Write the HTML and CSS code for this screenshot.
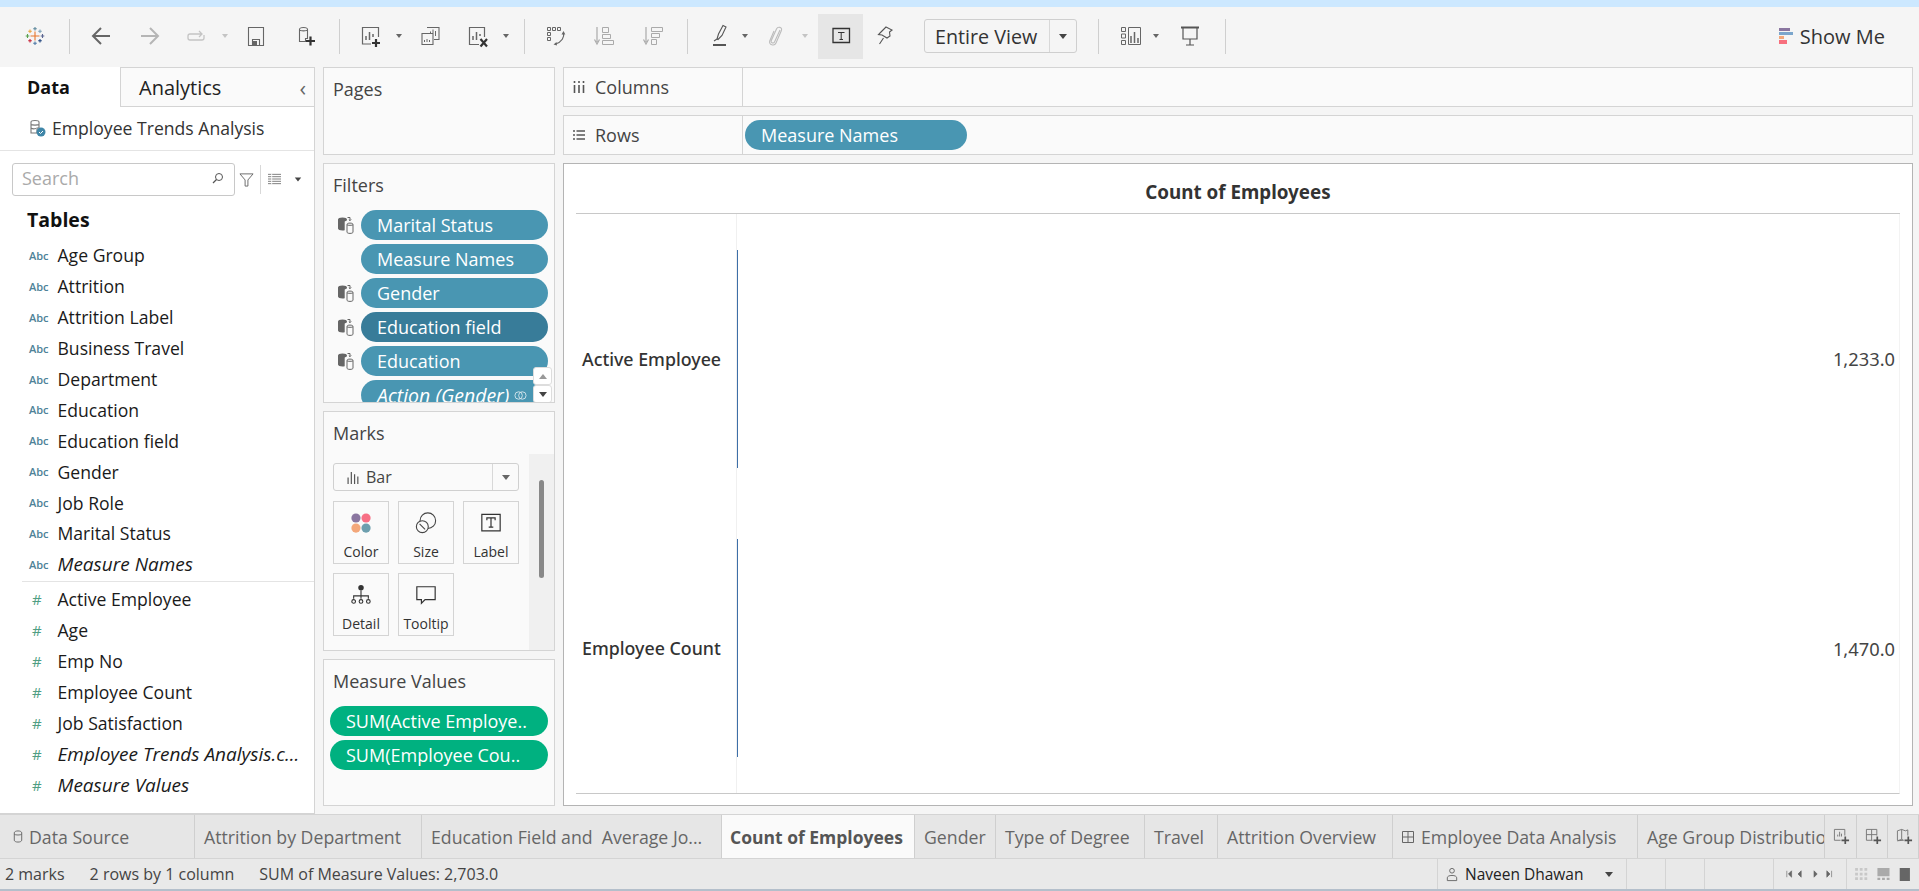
FILE: index.html
```html
<!DOCTYPE html>
<html lang="en">
<head>
<meta charset="utf-8">
<title>Tableau - Count of Employees</title>
<link rel="stylesheet" href="styles.css">
</head>
<body>
<svg class="defs" width="0" height="0" aria-hidden="true">
  <defs>
    <symbol id="dbl" viewBox="0 0 18 18">
      <ellipse cx="5.5" cy="3.5" rx="4.5" ry="2" fill="#666"/>
      <path d="M1 3.5v9c0 1.2 2 2 4.5 2 .8 0 1.5-.1 2.2-.2V3.5z" fill="#666"/>
      <path d="M10.500 1.500h2.500v3M11.800 3.500l1.200 1.200 1.200-1.200" fill="none" stroke="#666"/>
      <path d="M10 8.500c0-1 1.200-1.400 3-1.400s3 .4 3 1.400v7.500c0 1-1.200 1.400-3 1.400s-3-.4-3-1.400zM10 8.800c.6.7 5.400.7 6 0" fill="#fafafa" stroke="#666"/>
    </symbol>
  </defs>
</svg>
<div class="app">
  <div class="titlebar"></div>

  <header class="toolbar">
    <svg class="ic logo" viewBox="0 0 24 24">
      <g fill="none" stroke-width="1.100">
        <path d="M12 7.500v9M7.500 12h9" stroke="#e8762b"/>
        <path d="M12 3v3.500M10.200 4.700h3.600" stroke="#5b879b"/>
        <path d="M12 17.500v3.500M10.200 19.300h3.600" stroke="#4e79a7"/>
        <path d="M4.500 10v4M2.700 12h3.600" stroke="#59a14f"/>
        <path d="M19.500 10v4M17.700 12h3.600" stroke="#5b6591"/>
        <path d="M7 5.500v3.500M5.200 7.200h3.600" stroke="#e8a33d"/>
        <path d="M17 5.500v3.500M15.200 7.200h3.600" stroke="#7b9fb5"/>
        <path d="M7 15v3.500M5.200 16.800h3.600" stroke="#c72035"/>
        <path d="M17 15v3.500M15.200 16.800h3.600" stroke="#1f447e"/>
      </g>
    </svg>
    <span class="sep s1"></span>
    <svg class="ic i-back" viewBox="0 0 24 24"><path d="M21 12H5M12 4l-8 8 8 8" fill="none" stroke="#666" stroke-width="2"/></svg>
    <svg class="ic i-fwd" viewBox="0 0 24 24"><path d="M3 12h16M12 4l8 8-8 8" fill="none" stroke="#b5b5b5" stroke-width="2"/></svg>
    <svg class="ic i-redo" viewBox="0 0 24 24"><path d="M20 11v3c0 1-.6 2-2 2H6c-1.400 0-2-1-2-2v-2c0-1 .6-2 2-2h12M15 7l3 3-3 3" fill="none" stroke="#c4c4c4" stroke-width="1.300"/></svg>
    <span class="car off c-redo"></span>
    <svg class="ic i-save" viewBox="0 0 24 24"><path d="M4.500 3.500h15v18h-15zM8.500 21.500v-6h7v6" fill="none" stroke="#666" stroke-width="1.100"/><path d="M9 17h4v4H9z" fill="#666"/></svg>
    <svg class="ic i-ds" viewBox="0 0 24 24"><path d="M6.500 5.500c0-1.400 2-2 4-2s4 .6 4 2v9h-2v3h-6zM6.500 6c.8 1.200 7.200 1.200 8 0" fill="none" stroke="#666" stroke-width="1.100"/><path d="M17.500 12.500v9M13 17h9" stroke="#333" stroke-width="2.200"/></svg>
    <span class="sep s2"></span>
    <svg class="ic i-add" viewBox="0 0 24 24"><path d="M13 20H4.500V3.500h16V13" fill="none" stroke="#666" stroke-width="1.200"/><path d="M8 16v-4M11.500 16V8M15 13V10" stroke="#666" stroke-width="1.500"/><path d="M18 15v8M14 19h8" stroke="#333" stroke-width="2.200"/></svg>
    <span class="car c-add"></span>
    <svg class="ic i-dup" viewBox="0 0 24 24"><path d="M9 3.500h12v12h-5M4 9.500h11v11H4z" fill="#f5f5f5" stroke="#666" stroke-width="1.100"/><path d="M12.500 9V7.500M15 9V5.500M17.500 12V7" stroke="#666"/><path d="M6.500 18v-2M9 18v-3M11.500 18v-2" stroke="#666"/></svg>
    <svg class="ic i-clear" viewBox="0 0 24 24"><path d="M13 20.500H3.500V3.500h15V13" fill="none" stroke="#666" stroke-width="1.200"/><path d="M7 16v-4M10.500 16V8M14 12V10" stroke="#666" stroke-width="1.500"/><path d="M14.500 15l6.500 7.500M21 15l-6.500 7.500" stroke="#333" stroke-width="2.200"/></svg>
    <span class="car c-clear"></span>
    <span class="sep s3"></span>
    <svg class="ic i-swap" viewBox="0 0 24 24"><path d="M3.500 3.500h3v3h-3zM8.500 3.500h3v3h-3zM13.500 3.500h3v3h-3zM3.500 8.500h3v3h-3zM3.500 13.500h3v3h-3z" fill="none" stroke="#666"/><path d="M19.500 9c1 4-1.500 9-8 11" fill="none" stroke="#666" stroke-width="1.200"/><path d="M17.500 10.500L19.500 7l1.800 3.500zM12.500 18l-3 2.500 3.500 1z" fill="#666"/></svg>
    <svg class="ic i-sa" viewBox="0 0 24 24"><path d="M5 3v15M2.500 15.500L5 20l2.500-4.500" fill="none" stroke="#aaa" stroke-width="1.200"/><path d="M10.500 3.500h6v5h-6zM10.500 10.500h8v4h-8zM10.500 16.500h11v4h-11z" fill="none" stroke="#aaa"/></svg>
    <svg class="ic i-sd" viewBox="0 0 24 24"><path d="M5 3v15M2.500 15.500L5 20l2.500-4.500" fill="none" stroke="#aaa" stroke-width="1.200"/><path d="M10.500 3.500h11v4h-11zM10.500 9.500h8v4h-8zM10.500 15.500h5v5h-5z" fill="none" stroke="#aaa"/></svg>
    <span class="sep s4"></span>
    <svg class="ic i-hl" viewBox="0 0 24 24"><path d="M9 15l1.500-5L15 1.500l3 1.500-4 8.500-4 4zM6 17l3-2" fill="none" stroke="#555" stroke-width="1.100"/><path d="M5 21h13" stroke="#555" stroke-width="2"/></svg>
    <span class="car c-hl"></span>
    <svg class="ic i-clip" viewBox="0 0 24 24"><path d="M15 6l-5.500 12c-.8 1.800-4 1-3.300-1.200L11.500 5c1.200-2.800 6-2 5 1.200L11 19c-1.500 3.500-7.500 2-6.300-2L9 7" fill="none" stroke="#bcbcbc" stroke-width="1.100"/></svg>
    <span class="car off c-clip"></span>
    <div class="tool-active"><svg class="ic" viewBox="0 0 24 24"><path d="M4 4.500h16.500v14H4z" fill="none" stroke="#333" stroke-width="1.300"/><path d="M9 8.500h6.500M12.200 8.500v7M10.500 15.500h3.500" fill="none" stroke="#333"/></svg></div>
    <svg class="ic i-pin" viewBox="0 0 24 24"><path d="M13 3l6 3-2.500 2 .5 4-3 2-5-3-3.500-.5 2.500-2.500zM10.500 14l-4 6" fill="none" stroke="#555" stroke-width="1.100"/></svg>
    <div class="combo"><span class="combo-label">Entire View</span><span class="combo-btn"><span class="car dark"></span></span></div>
    <span class="sep s5"></span>
    <svg class="ic i-cards" viewBox="0 0 24 24"><path d="M2.500 3.500h4v4h-4zM2.500 10h4v4h-4zM2.500 16.500h4v4h-4zM9.500 3.500h12v17h-12z" fill="none" stroke="#666"/><path d="M12 19v-7M15.500 19V8M19 19v-5" stroke="#666" stroke-width="1.500"/></svg>
    <span class="car c-cards"></span>
    <svg class="ic i-present" viewBox="0 0 24 24"><path d="M3 3.500h18" stroke="#555" stroke-width="2"/><path d="M5 4v11h14V4M12 15v6M8 21h8" fill="none" stroke="#555" stroke-width="1.200"/></svg>
    <span class="sep s6"></span>
    <div class="showme">
      <svg class="showme-ic" viewBox="0 0 14 16"><path d="M0 0h11v3H0z" fill="#8a76a0"/><path d="M0 4h14v3H0z" fill="#7ba6cc"/><path d="M0 8h5v3H0z" fill="#f3a77a"/><path d="M0 12h8v4H0z" fill="#f76f7d"/></svg>
      <span>Show Me</span>
    </div>
  </header>

  <main class="workspace">
    <aside class="sidebar">
      <div class="side-tabs">
        <div class="side-tab active">Data</div>
        <div class="side-tab analytics">Analytics<span class="chev">‹</span></div>
      </div>
      <div class="source">
        <svg class="source-ic" viewBox="0 0 18 18"><path d="M3 3c0-1 1.800-1.500 4-1.500S11 2 11 3v6H9v5H3zM3 5.500c1 .8 7 .8 8 0M3 9c1 .8 4 .8 5 .5" fill="none" stroke="#777" stroke-width="1.100"/><circle cx="13" cy="13" r="4.500" fill="#3f86a8"/><path d="M11 13l1.500 1.500 2.500-2.500" fill="none" stroke="#fff"/></svg>
        <span>Employee Trends Analysis</span>
      </div>
      <div class="search-row">
        <div class="search"><span>Search</span>
          <svg class="search-ic" viewBox="0 0 12 12"><circle cx="7" cy="5" r="3.500" fill="none" stroke="#555"/><path d="M4.500 7.500L1 11" stroke="#555" stroke-width="1.200"/></svg>
        </div>
        <svg class="filter-ic" viewBox="0 0 16 16"><path d="M1 2h14L9.500 8.500V15h-3V8.500z" fill="none" stroke="#666"/></svg>
        <span class="search-div"></span>
        <svg class="list-ic" viewBox="0 0 14 12"><path d="M0 1h14M0 3.500h14M0 6h14M0 8.500h14M0 11h14" stroke="#777"/><path d="M4 0v12" stroke="#fff"/></svg>
        <span class="car dark"></span>
      </div>
      <h2 class="tables">Tables</h2>
      <ul class="fields">
        <li><span class="t abc">Abc</span>Age Group</li>
        <li><span class="t abc">Abc</span>Attrition</li>
        <li><span class="t abc">Abc</span>Attrition Label</li>
        <li><span class="t abc">Abc</span>Business Travel</li>
        <li><span class="t abc">Abc</span>Department</li>
        <li><span class="t abc">Abc</span>Education</li>
        <li><span class="t abc">Abc</span>Education field</li>
        <li><span class="t abc">Abc</span>Gender</li>
        <li><span class="t abc">Abc</span>Job Role</li>
        <li><span class="t abc">Abc</span>Marital Status</li>
        <li class="em"><span class="t abc">Abc</span>Measure Names</li>
      </ul>
      <ul class="fields measures">
        <li><span class="t num">#</span>Active Employee</li>
        <li><span class="t num">#</span>Age</li>
        <li><span class="t num">#</span>Emp No</li>
        <li><span class="t num">#</span>Employee Count</li>
        <li><span class="t num">#</span>Job Satisfaction</li>
        <li class="em"><span class="t num">#</span>Employee Trends Analysis.c...</li>
        <li class="em"><span class="t num">#</span>Measure Values</li>
      </ul>
    </aside>

    <section class="cards">
      <div class="card pages"><div class="card-title">Pages</div></div>
      <div class="card filters">
        <div class="card-title">Filters</div>
        <div class="filter-list">
          <div class="filter"><svg class="dbl"><use href="#dbl"/></svg><span class="pill">Marital Status</span></div>
          <div class="filter"><span class="dbl"></span><span class="pill">Measure Names</span></div>
          <div class="filter"><svg class="dbl"><use href="#dbl"/></svg><span class="pill">Gender</span></div>
          <div class="filter"><svg class="dbl"><use href="#dbl"/></svg><span class="pill dark">Education field</span></div>
          <div class="filter"><svg class="dbl"><use href="#dbl"/></svg><span class="pill">Education</span></div>
          <div class="filter"><span class="dbl"></span><span class="pill action">Action (Gender)
            <svg class="link-ic" viewBox="0 0 14 14"><circle cx="5" cy="7" r="4" fill="none" stroke="#d5e6ed"/><circle cx="9" cy="7" r="4" fill="none" stroke="#d5e6ed"/></svg></span></div>
        </div>
        <div class="scroll-btns">
          <span class="sb"><span class="car up"></span></span>
          <span class="sb"><span class="car dark"></span></span>
        </div>
      </div>
      <div class="card marks">
        <div class="card-title">Marks</div>
        <div class="marks-body">
          <div class="marks-main">
            <div class="mark-type">
              <svg class="bar-ic" viewBox="0 0 12 12"><path d="M1 12V6M4 12V1M7 12V3M10 12V5" stroke="#555" stroke-width="1.100"/></svg>
              <span class="mark-label">Bar</span>
              <span class="mark-btn"><span class="car"></span></span>
            </div>
            <div class="mark-grid">
              <div class="mark-card">
                <svg viewBox="0 0 24 24"><circle cx="6.500" cy="6.500" r="5" fill="#8a76a0"/><circle cx="17.500" cy="6.500" r="5" fill="#f76f84"/><circle cx="6.500" cy="17.500" r="5" fill="#f3a77a"/><circle cx="17.500" cy="17.500" r="5" fill="#6d9fae"/></svg>
                <span>Color</span>
              </div>
              <div class="mark-card">
                <svg viewBox="0 0 24 24"><circle cx="14" cy="9.500" r="8.500" fill="none" stroke="#444" stroke-width="1.200"/><circle cx="8" cy="16" r="6.500" fill="#fafafa" stroke="#444" stroke-width="1.200"/><path d="M5 13l6 6" stroke="#444" stroke-width="1.200"/></svg>
                <span>Size</span>
              </div>
              <div class="mark-card">
                <svg viewBox="0 0 24 24"><path d="M2 2.500h20v18H2z" fill="none" stroke="#333" stroke-width="1.300"/><path d="M7.500 9V6.500h9V9M12 6.500v10M9.500 16.500h5" fill="none" stroke="#333" stroke-width="1.300"/></svg>
                <span>Label</span>
              </div>
              <div class="mark-card">
                <svg viewBox="0 0 24 24"><circle cx="12" cy="4" r="3" fill="#333"/><path d="M12 7v9M4 16v-3h16v3" fill="none" stroke="#333" stroke-width="1.200"/><circle cx="4" cy="19" r="2" fill="none" stroke="#333" stroke-width="1.200"/><circle cx="12" cy="19" r="2" fill="none" stroke="#333" stroke-width="1.200"/><circle cx="20" cy="19" r="2" fill="none" stroke="#333" stroke-width="1.200"/></svg>
                <span>Detail</span>
              </div>
              <div class="mark-card">
                <svg viewBox="0 0 24 24"><path d="M2 3h20v14H11l-4 4v-4H2z" fill="none" stroke="#333" stroke-width="1.300"/></svg>
                <span>Tooltip</span>
              </div>
            </div>
          </div>
          <div class="marks-scroll"><span class="thumb"></span></div>
        </div>
      </div>
      <div class="card mvalues">
        <div class="card-title">Measure Values</div>
        <div class="mv-list">
          <span class="pill green">SUM(Active Employe..</span>
          <span class="pill green">SUM(Employee Cou..</span>
        </div>
      </div>
    </section>

    <section class="viewcol">
      <div class="shelf">
        <div class="shelf-label">
          <svg class="shelf-ic" viewBox="0 0 12 12"><path d="M1.500 4v8M6 4v8M10.500 4v8" stroke="#555" stroke-width="1.600"/><path d="M1.500 0v2M6 0v2M10.500 0v2" stroke="#555" stroke-width="1.600"/></svg>
          Columns
        </div>
      </div>
      <div class="shelf">
        <div class="shelf-label">
          <svg class="shelf-ic" viewBox="0 0 12 12"><path d="M0 2h2M0 6h2M0 10h2M3.500 2H12M3.500 6H12M3.500 10H12" stroke="#555" stroke-width="1.500"/></svg>
          Rows
        </div>
        <div class="shelf-body"><span class="pill wide">Measure Names</span></div>
      </div>
      <div class="view">
        <h1 class="view-title">Count of Employees</h1>
        <div class="viz">
          <div class="viz-row">
            <div class="row-head">Active Employee</div>
            <div class="row-pane"><span class="bar"></span><span class="val">1,233.0</span></div>
          </div>
          <div class="viz-row">
            <div class="row-head">Employee Count</div>
            <div class="row-pane"><span class="bar"></span><span class="val">1,470.0</span></div>
          </div>
        </div>
      </div>
    </section>
  </main>

  <nav class="tabs">
    <div class="tab"><svg class="tab-ic small" viewBox="0 0 10 14"><path d="M1 3c0-1.200 1.800-2 4-2s4 .8 4 2v8c0 1.200-1.800 2-4 2s-4-.8-4-2zM1 4.500c1 1.200 7 1.200 8 0" fill="none" stroke="#666"/></svg>Data Source</div>
    <div class="tab">Attrition by Department</div>
    <div class="tab">Education Field and  Average Jo...</div>
    <div class="tab active">Count of Employees</div>
    <div class="tab">Gender</div>
    <div class="tab">Type of Degree</div>
    <div class="tab">Travel</div>
    <div class="tab">Attrition Overview</div>
    <div class="tab"><svg class="tab-ic" viewBox="0 0 12 12"><path d="M.5.500h11v11H.5zM6 .5v11M.5 6h11" fill="none" stroke="#666"/></svg>Employee Data Analysis</div>
    <div class="tab clip">Age Group Distribution</div>
    <div class="tab add"><svg viewBox="0 0 18 18"><path d="M8 13H1.500V1.500h11V8" fill="none" stroke="#777"/><path d="M5 9V7M7 9V4M9 9V6" stroke="#777"/><path d="M13 9v8M9 13h8" stroke="#555" stroke-width="1.800"/></svg></div>
    <div class="tab add"><svg viewBox="0 0 18 18"><path d="M8 13H1.500V1.500h11V8M7 1.500V13M1.500 7H12.500" fill="none" stroke="#777"/><path d="M13 9v8M9 13h8" stroke="#555" stroke-width="1.800"/></svg></div>
    <div class="tab add"><svg viewBox="0 0 18 18"><path d="M1.500 3L6 1.500l4 1.500 2.500-1V8M8 13l-2-1-4.500 1.500zM1.500 3v10M6 1.500V12" fill="none" stroke="#777"/><path d="M13 9v8M9 13h8" stroke="#555" stroke-width="1.800"/></svg></div>
  </nav>

  <footer class="status">
    <div class="status-info"><span>2 marks</span><span>2 rows by 1 column</span><span>SUM of Measure Values: 2,703.0</span></div>
    <div class="status-cell user">
      <svg viewBox="0 0 12 16"><circle cx="6" cy="4" r="2.500" fill="none" stroke="#666"/><path d="M1 14.500v-3c0-1.500 2-2.500 5-2.500s5 1 5 2.500v3z" fill="none" stroke="#666"/></svg>
      <span class="user-name">Naveen Dhawan</span><span class="car dark"></span>
    </div>
    <div class="status-cell"></div>
    <div class="status-cell"></div>
    <div class="status-cell"></div>
    <div class="status-cell pager">
      <svg viewBox="0 0 60 10"><path d="M1 1v8M7 1L3 5l4 4zM19 1l-4 4 4 4zM35 1l4 4-4 4zM51 1l4 4-4 4zM57 1v8" fill="#666" stroke="#666" stroke-width=".8"/></svg>
    </div>
    <div class="status-cell views">
      <svg viewBox="0 0 60 14"><path d="M0 0h3v3H0zM5 0h3v3H5zM10 0h3v3h-3zM0 5h3v3H0zM5 5h3v3H5zM10 5h3v3h-3zM0 10h3v3H0zM5 10h3v3H5zM10 10h3v3h-3z" fill="#c8c8c8"/><path d="M24 0h13v9H24zM24 10.500h3V13h-3zM29 10.500h3V13h-3zM34 10.500h3V13h-3z" fill="#aaa"/><path d="M48 0h11v14H48z" fill="#666"/></svg>
    </div>
  </footer>
</div>
</body>
</html>
```

FILE: styles.css
```css
* { box-sizing: border-box; }
html, body { margin: 0; padding: 0; height: 100%; overflow: hidden; }
body {
  background: #f5f5f5;
  color: #1a1a1a;
  font-family: "Open Sans", "Noto Sans", "Liberation Sans", sans-serif;
  font-size: 17.600px;
}
.defs { position: absolute; }
ul { list-style: none; margin: 0; padding: 0; }
h1, h2 { margin: 0; }
.app { display: flex; flex-direction: column; width: 1919px; height: 891px; }
.titlebar { height: 7px; background: #cce8ff; flex: none; }

/* toolbar */
.toolbar { height: 60px; flex: none; display: flex; align-items: center; padding: 0 0 2px 23px; background: #f5f5f5; }
.ic { width: 24px; height: 24px; flex: none; }
.sep { width: 1px; height: 35px; background: #cfcfcf; flex: none; }
.car { width: 0; height: 0; flex: none; display: inline-block; border-left: 4px solid transparent; border-right: 4px solid transparent; border-top: 5px solid #666; }
.toolbar > .car { border-left-width: 3px; border-right-width: 3px; border-top-width: 4px; }
.car.off { border-top-color: #c4c4c4; }
.car.dark { border-top-color: #444; }
.car.up { border-top: 0; border-bottom: 5px solid #999; }
.s1 { margin-left: 22px; }
.i-back { margin-left: 19px; }
.i-fwd { margin-left: 25px; }
.i-redo { margin-left: 22px; }
.c-redo { margin-left: 14px; }
.i-save { margin-left: 16px; }
.i-ds { margin-left: 25px; }
.s2 { margin-left: 22px; }
.i-add { margin-left: 18px; }
.c-add { margin-left: 14px; }
.i-dup { margin-left: 16px; }
.i-clear { margin-left: 24px; }
.c-clear { margin-left: 13px; }
.s3 { margin-left: 15px; }
.i-swap { margin-left: 19px; }
.i-sa { margin-left: 24px; }
.i-sd { margin-left: 25px; }
.s4 { margin-left: 22px; }
.i-hl { margin-left: 20px; }
.c-hl { margin-left: 10px; }
.i-clip { margin-left: 17px; }
.c-clip { margin-left: 13px; }
.tool-active { margin-left: 10px; width: 45px; height: 45px; background: #e6e6e6; display: flex; align-items: center; justify-content: center; }
.i-pin { margin-left: 10px; }
.combo { margin-left: 27px; width: 153px; height: 34px; border: 1px solid #cfcfcf; border-radius: 3px; display: flex; align-items: center; }
.combo-label { flex: 1; padding-left: 10px; font-size: 19.700px; color: #333; }
.combo-btn { width: 27px; height: 100%; border-left: 1px solid #d8d8d8; display: flex; align-items: center; justify-content: center; }
.s5 { margin-left: 21px; }
.i-cards { margin-left: 20px; }
.c-cards { margin-left: 10px; }
.i-present { margin-left: 19px; }
.s6 { margin-left: 23px; }
.showme { margin-left: auto; padding-right: 34px; display: flex; align-items: center; gap: 7px; font-size: 20px; color: #333; }
.showme-ic { width: 14px; height: 16px; }

/* workspace */
.workspace { flex: none; height: 747px; display: flex; }
.sidebar { width: 315px; flex: none; background: #fff; border-right: 1px solid #d4d4d4; border-bottom: 1px solid #d4d4d4; }
.side-tabs { display: flex; height: 40px; }
.side-tab { display: flex; align-items: center; }
.side-tab.active { width: 120px; padding: 0 0 1px 27px; font-weight: 700; color: #111; font-size: 18px; }
.side-tab.analytics { flex: 1; padding-left: 18px; background: #fafafa; border-left: 1px solid #d4d4d4; border-bottom: 1px solid #d4d4d4; border-top: 1px solid #d4d4d4; justify-content: space-between; padding-right: 8px; font-size: 20px; color: #222; }
.chev { color: #666; font-size: 22px; line-height: 1; }
.source { height: 44px; display: flex; align-items: center; padding: 0 0 2px 28px; gap: 6px; border-bottom: 1px solid #e4e4e4; color: #333; }
.source-ic { width: 18px; height: 18px; }
.search-row { display: flex; align-items: center; margin: 11px 0 0 12px; height: 34px; }
.search { width: 223px; height: 33px; border: 1px solid #c8c8c8; border-radius: 3px; display: flex; align-items: center; justify-content: space-between; padding: 0 10px 2px 9px; color: #aaa; font-size: 18px; }
.search-ic { width: 12px; height: 12px; }
.filter-ic { width: 15px; height: 15px; margin-left: 4px; }
.search-div { width: 1px; height: 29px; background: #d8d8d8; margin-left: 6px; }
.list-ic { width: 13px; height: 12px; margin-left: 7px; }
.search-row .car { margin-left: 13px; transform: scale(.8); }
.tables { font-size: 19.500px; font-weight: 700; color: #111; padding-left: 27px; height: 26px; line-height: 26px; margin-top: 11px; }
.fields { margin-top: 7px; }
.fields li { height: 30.900px; display: flex; align-items: center; padding-left: 29px; white-space: nowrap; }
.fields li.em { font-style: italic; font-size: 19px; }
.t { width: 28.500px; flex: none; font-style: normal; }
.abc { font-size: 11px; font-weight: 600; color: #4e8298; }
.num { font-size: 15px; color: #4f9e83; padding-left: 3px; }
.measures { margin: 1px 0 0 22px; border-top: 1px solid #e4e4e4; padding-top: 2px; }
.measures li { padding-left: 7px; }

/* cards */
.cards { width: 232px; flex: none; margin-left: 8px; display: flex; flex-direction: column; gap: 8px; }
.card { background: #fafafa; border: 1px solid #d4d4d4; position: relative; overflow: hidden; flex: none; font-size: 18px; }
.card-title { color: #444; padding: 9px 0 0 9px; height: 34px; line-height: 24px; }
.pages { height: 88px; }
.filters { height: 240px; }
.marks { height: 240px; }
.mvalues { height: 147px; }
.filter-list { display: flex; flex-direction: column; gap: 4px; margin-top: 12px; }
.filter { display: flex; align-items: center; height: 30px; flex: none; }
.dbl { width: 18px; height: 18px; margin: 0 6px 0 13px; flex: none; }
.pill { display: flex; align-items: center; height: 30px; border-radius: 15px; background: #4996b2; color: #fff; padding-left: 16px; white-space: nowrap; overflow: hidden; font-size: 18px; }
.filter .pill { width: 187px; }
.pill.dark { background: #387c99; }
.pill.action { font-style: italic; gap: 5px; font-size: 19.500px; }
.link-ic { width: 13px; height: 13px; flex: none; }
.scroll-btns { position: absolute; right: 2px; top: 203px; width: 19px; display: flex; flex-direction: column; }
.sb { height: 18px; background: #fff; border: 1px solid #ddd; border-radius: 3px; display: flex; align-items: center; justify-content: center; }

.marks-body { display: flex; margin-top: 8px; }
.marks-main { width: 205px; padding: 9px 0 0 9px; }
.marks .card-title { height: 34px; }
.mark-type { width: 186px; height: 28px; border: 1px solid #d0d0d0; border-radius: 3px; display: flex; align-items: center; padding-left: 13px; color: #444; font-size: 16px; }
.bar-ic { width: 13px; height: 13px; margin-right: 6px; }
.mark-label { flex: 1; }
.mark-btn { width: 26px; height: 100%; border-left: 1px solid #d8d8d8; display: flex; align-items: center; justify-content: center; }
.mark-grid { display: grid; grid-template-columns: repeat(3, 56px); grid-auto-rows: 63px; gap: 9px; margin-top: 10px; }
.mark-card { border: 1px solid #d4d4d4; display: flex; flex-direction: column; align-items: center; padding-top: 10px; font-size: 14px; color: #333; }
.mark-card svg { width: 22px; height: 22px; margin-bottom: 8px; flex: none; }
.marks-scroll { flex: 1; background: #f0f0f0; display: flex; justify-content: center; padding-top: 26px; height: 197px; }
.thumb { width: 5px; height: 98px; background: #888; border-radius: 3px; }
.mv-list { display: flex; flex-direction: column; gap: 4px; padding: 12px 6px 0 6px; }
.pill.green { background: #00b180; width: 218px; height: 30px; }

/* view column */
.viewcol { width: 1350px; flex: none; margin-left: 8px; display: flex; flex-direction: column; gap: 8px; }
.shelf { height: 40px; flex: none; display: flex; background: #fafafa; border: 1px solid #d4d4d4; }
.shelf-label { width: 179px; height: 100%; flex: none; border-right: 1px solid #d4d4d4; display: flex; align-items: center; padding: 0 0 1px 9px; gap: 10px; color: #444; font-size: 18px; }
.shelf-ic { width: 12px; height: 12px; }
.shelf-body { display: flex; align-items: center; padding-left: 2px; }
.pill.wide { width: 222px; }
.view { height: 643px; flex: none; background: #fff; border: 1px solid #b4b4b4; padding: 0 12px; }
.view-title { height: 50px; border-bottom: 1px solid #c8c8c8; text-align: center; font-size: 18.800px; line-height: 56px; font-weight: 700; color: #333; font-family: "Noto Sans", "Open Sans", sans-serif; }
.viz { height: 580px; display: grid; grid-template-rows: 1fr 1fr; border-bottom: 1px solid #c8c8c8; border-right: 1px solid #f3f3f3; }
.viz-row { display: flex; min-height: 0; }
.row-head { width: 160px; flex: none; display: flex; align-items: center; padding-left: 6px; font-size: 17.800px; font-weight: 500; color: #333; font-family: "Noto Sans", "Open Sans", sans-serif; white-space: nowrap; }
.row-pane { flex: 1; border-left: 1px solid #f0f0f0; display: flex; align-items: center; justify-content: space-between; padding-right: 4px; }
.bar { width: 1px; height: 218px; background: #3d6fa8; }
.val { font-size: 18.300px; color: #444; font-family: "Noto Sans", "Open Sans", sans-serif; }

/* tabs */
.tabs { flex: none; height: 45px; display: grid; grid-template-columns: 195px 227px 300px 193px 81px 149px 73px 175px 245px 187px 32px 31px 31px; background: #e6e6e6; border-top: 1px solid #d4d4d4; border-bottom: 1px solid #d4d4d4; }
.tab { display: flex; align-items: center; padding-left: 9px; border-right: 1px solid #cfcfcf; color: #666; white-space: pre; overflow: hidden; font-size: 17.700px; }
.tab.active { background: #fafafa; color: #555; font-weight: 700; padding-left: 8px; font-size: 17.500px; }
.tab-ic { width: 12px; height: 12px; margin-right: 7px; flex: none; }
.tab-ic.small { width: 10px; height: 13px; margin: 0 6px 0 4px; }
.tab.clip { border-right: 1px solid #cfcfcf; }
.tab.add { padding-left: 8px; }
.tab.add svg { width: 17px; height: 17px; }

/* status */
.status { flex: none; height: 32px; display: grid; grid-template-columns: 1437px 189px 39px 39px 69px 73px 73px; background: #e9e9e9; border-bottom: 2px solid #b4bfcb; font-size: 16px; color: #444; }
.status-info { display: flex; align-items: center; padding-left: 5px; gap: 25px; }
.status-cell { border-left: 1px solid #d4d4d4; display: flex; align-items: center; justify-content: center; }
.user { justify-content: flex-start; padding-left: 8px; gap: 7px; color: #222; font-size: 15.500px; }
.user svg { width: 12px; height: 15px; }
.user-name { width: 133px; }
.pager svg { width: 54px; height: 8px; }
.views svg { width: 56px; height: 13px; }
```
